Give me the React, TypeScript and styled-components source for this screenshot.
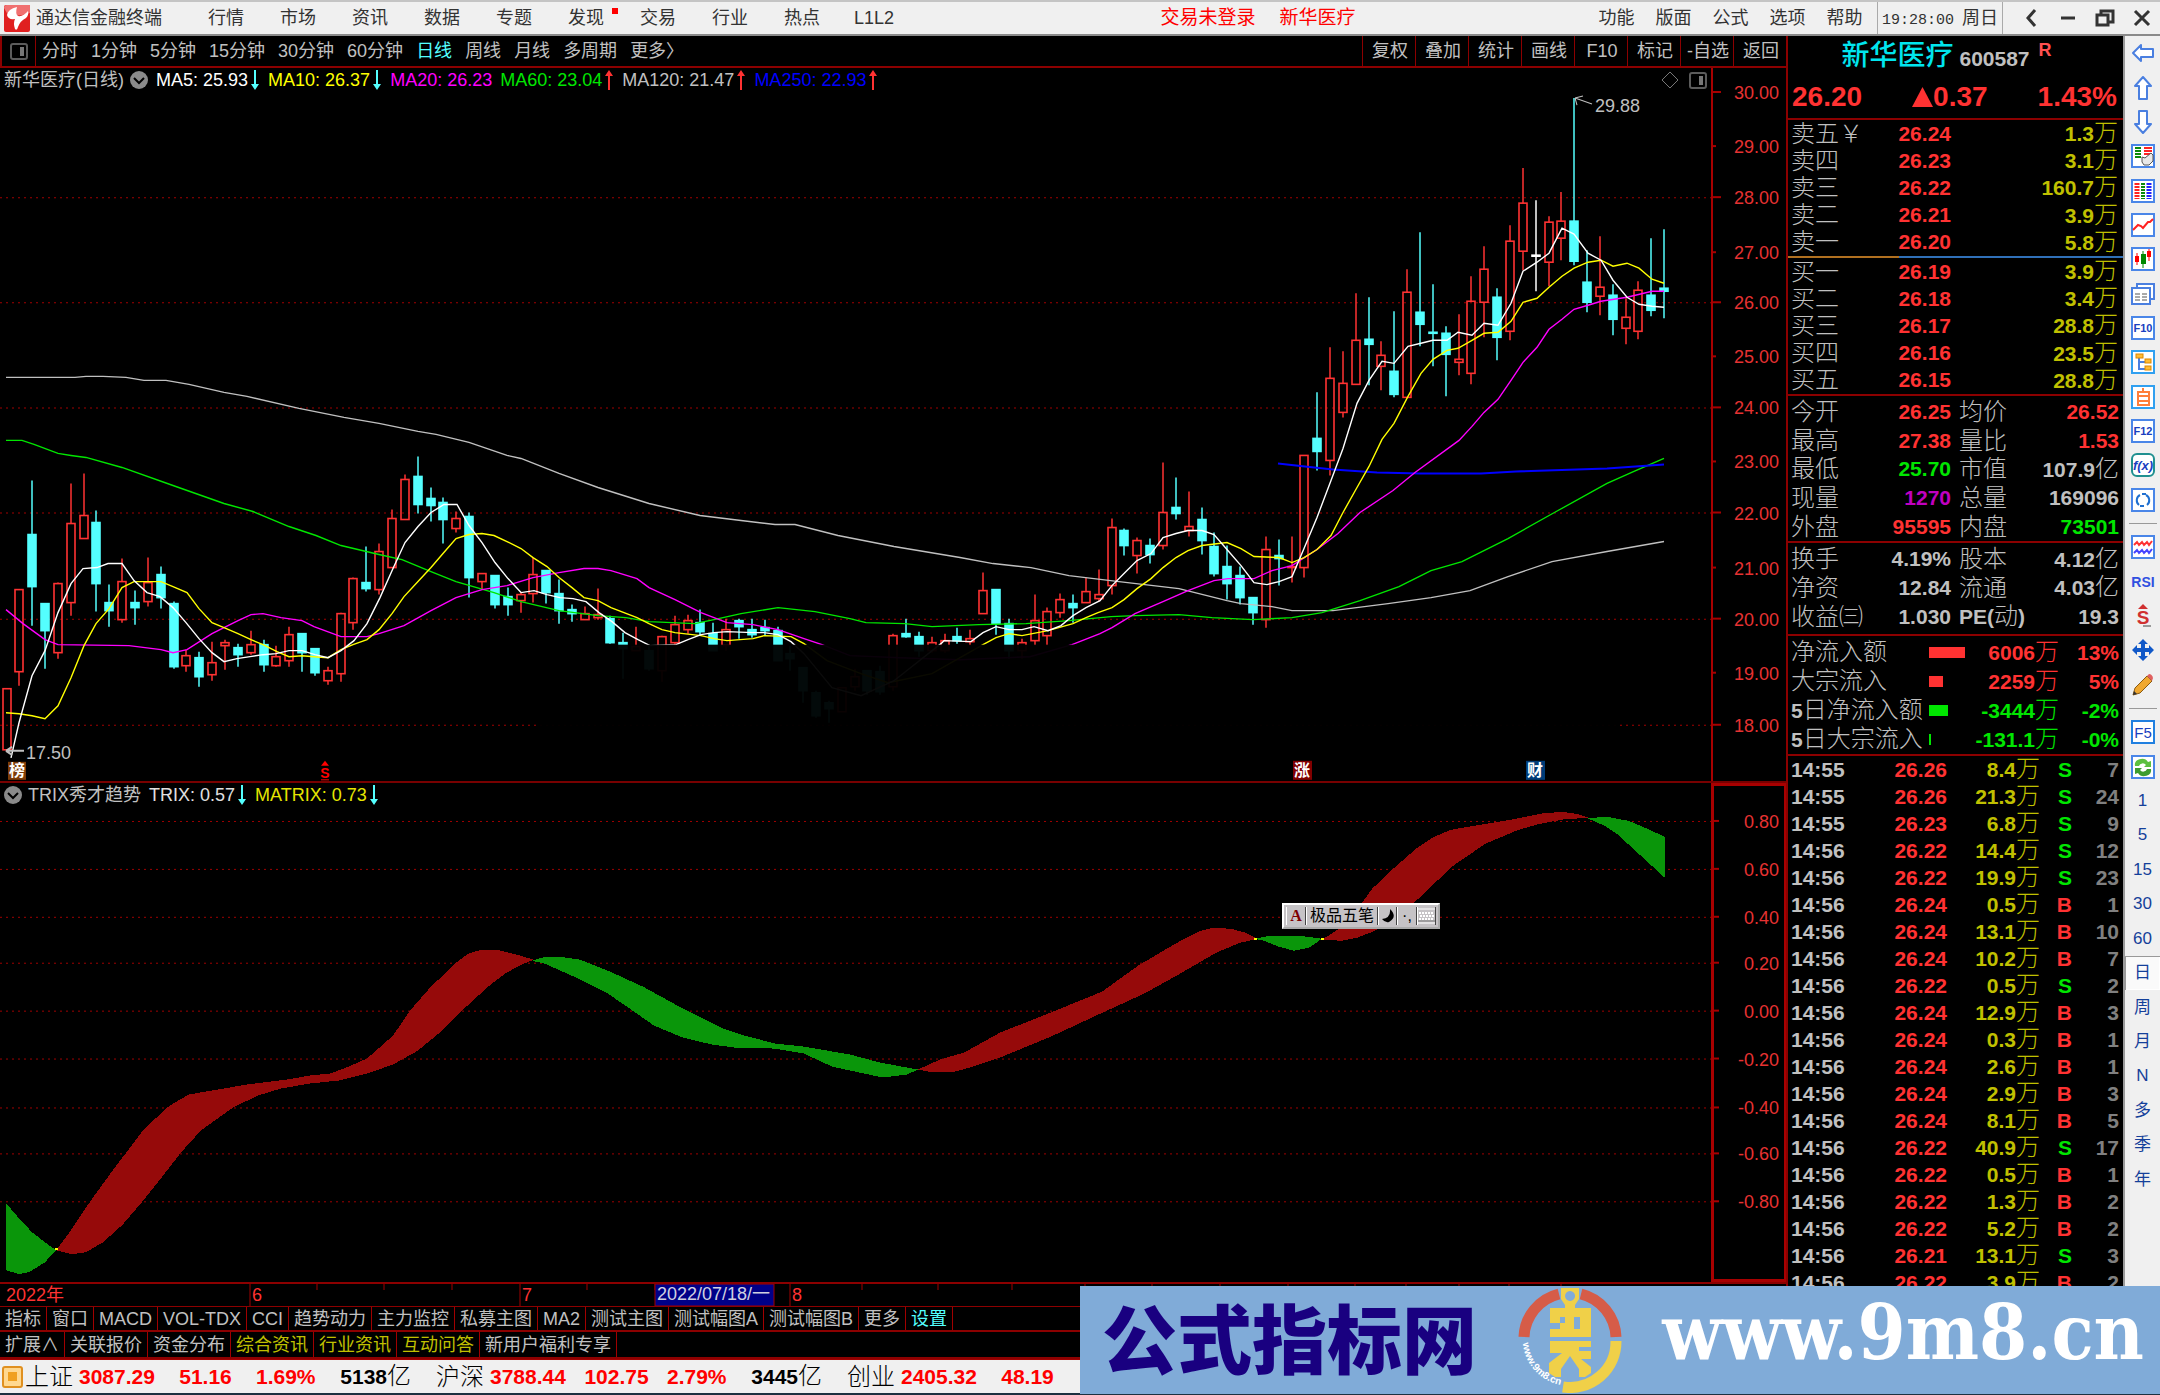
import React from "react";
import styled, { createGlobalStyle } from "styled-components";

const sans = `"Liberation Sans", "Noto Sans CJK SC", sans-serif`;

const GlobalStyle = createGlobalStyle`
  * { box-sizing: border-box; }
  html, body { margin: 0; background: #000; }
  body { font-family: ${sans}; font-size: 18px; line-height: 24px; overflow: hidden; }
  button { font: inherit; color: inherit; background: none; border: 0; padding: 0; margin: 0; cursor: pointer; white-space: nowrap; }
`;

const Shell = styled.div`
  position: relative;
  display: flex;
  flex-direction: column;
  height: 100vh;
  background: #000;
  color: #c0c0c0;
`;

/* ---------- title bar ---------- */

const TitleBar = styled.header`
  display: flex;
  align-items: center;
  height: 36px;
  flex: none;
  background: #f0f0f0;
  color: #333;
  border-top: 2px solid #c4c4c4;
  border-bottom: 2px solid #8a8a8a;
`;
const Brand = styled.div`
  display: flex;
  align-items: center;
  gap: 6px;
  width: 190px;
  padding-left: 4px;
  white-space: nowrap;
`;
const Menu = styled.nav`
  display: flex;
`;
const MenuItem = styled.button<{ $w: number }>`
  position: relative;
  width: ${(p) => p.$w}px;
`;
const NewDot = styled.i`
  position: absolute;
  right: 4px;
  top: 2px;
  width: 6px;
  height: 6px;
  background: #f00;
`;
const Notice = styled.div`
  flex: 1;
  display: flex;
  justify-content: center;
  gap: 24px;
  padding-left: 18px;
  color: #f00;
  font-size: 19px;
`;
const Clock = styled.time`
  width: 126px;
  height: 100%;
  padding: 4px 0 0 4px;
  border-left: 1px solid #aaa;
  border-right: 1px solid #aaa;
  margin-left: 4px;
  font-family: "Liberation Mono", "Noto Sans CJK SC", monospace;
  font-size: 15px;
  white-space: nowrap;
  span { font-family: ${sans}; font-size: 18px; margin-left: 8px; }
`;
const WindowButtons = styled.div`
  display: flex;
  padding-left: 9px;
  button { width: 37px; display: flex; justify-content: center; align-items: center; }
`;

/* ---------- body ---------- */

const Body = styled.main`
  display: grid;
  grid-template-columns: minmax(0, 1fr) 335px 37px;
  grid-template-rows: minmax(0, 1fr);
  flex: 1;
  min-height: 0;
`;
const ChartColumn = styled.section`
  position: relative;
  display: flex;
  flex-direction: column;
  min-height: 0;
  border-right: 2px solid #8c0000;
`;
const PeriodBar = styled.div`
  display: flex;
  align-items: stretch;
  height: 32px;
  flex: none;
  border-bottom: 2px solid #8c0000;
`;
const PanelToggle = styled.button`
  display: flex;
  align-items: center;
  justify-content: center;
  width: 36px;
  border-left: 2px solid #8c0000;
  border-right: 1px solid #8c0000;
`;
const Periods = styled.div`
  display: flex;
  gap: 13px;
  padding-left: 6px;
  flex: 1;
`;
const Period = styled.button<{ $active?: boolean }>`
  color: ${(p) => (p.$active ? "#54ffff" : "#c0c0c0")};
`;
const ToolButton = styled.button`
  width: 53px;
  padding-left: 2px;
  border-left: 1px solid #8c0000;
`;
const Pane = styled.div<{ $grow: number; $line?: boolean }>`
  display: grid;
  grid-template-columns: minmax(0, 1fr) 75px;
  grid-template-rows: minmax(0, 1fr);
  flex: ${(p) => p.$grow} 1 0;
  min-height: 0;
  border-bottom: ${(p) => (p.$line ? "2px solid #780000" : "0")};
`;
const Plot = styled.div`
  display: flex;
  flex-direction: column;
  min-height: 0;
`;
const Drawing = styled.svg`
  display: block;
  width: 100%;
  flex: 1;
  min-height: 0;
  font-family: ${sans};
`;
const Axis = styled.div<{ $box?: boolean }>`
  display: flex;
  min-height: 0;
  border-left: ${(p) => (p.$box ? "3px" : "2px")} solid #a80000;
  box-shadow: ${(p) => (p.$box ? "inset 0 3px #a80000, inset 0 -3px #a80000, inset -2px 0 #a80000" : "none")};
`;
const Legend = styled.div`
  display: flex;
  align-items: center;
  gap: 8px;
  height: 24px;
  flex: none;
  padding: 0 4px;
  white-space: nowrap;
`;
const LegendTitle = styled.span`
  display: flex;
  align-items: center;
  gap: 6px;
`;
const LegendItem = styled.span<{ $c: string }>`
  display: flex;
  align-items: center;
  gap: 2px;
  color: ${(p) => p.$c};
`;
const LegendTools = styled.span`
  display: flex;
  align-items: center;
  gap: 10px;
  margin-left: auto;
`;
const DateAxis = styled.div`
  height: 25px;
  flex: none;
  display: flex;
  border-top: 2px solid #8c0000;
  border-bottom: 1px solid #8c0000;
`;
const TabRow = styled.div<{ $h: number }>`
  display: flex;
  height: ${(p) => p.$h}px;
  flex: none;
  border-bottom: 2px solid #8c0000;
`;
const Tab = styled.button<{ $c?: string }>`
  padding: 0 5px;
  border-right: 1px solid #a00000;
  color: ${(p) => p.$c || "#c0c0c0"};
`;

/* ---------- input method strip ---------- */

const Ime = styled.div`
  position: absolute;
  left: 1282px;
  top: 867px;
  display: flex;
  align-items: stretch;
  height: 26px;
  padding: 2px;
  background: #c6c3c6;
  border: 2px outset #fff;
  color: #000;
`;
const ImeKey = styled.button<{ $w: number; $red?: boolean }>`
  display: flex;
  align-items: center;
  justify-content: center;
  width: ${(p) => p.$w}px;
  height: 18px;
  font-size: 16px;
  line-height: 18px;
  font-weight: ${(p) => (p.$red ? 700 : 400)};
  color: ${(p) => (p.$red ? "#800000" : "#000")};
  font-family: ${(p) => (p.$red ? `"Liberation Serif", serif` : sans)};
  border-right: 1px solid #444;
  border-left: 1px solid #fff;
`;

/* ---------- quote panel ---------- */

const Quote = styled.aside`
  min-height: 0;
  overflow: hidden;
  display: flex;
  flex-direction: column;
`;
const NameRow = styled.h1`
  display: flex;
  align-items: center;
  justify-content: center;
  gap: 6px;
  height: 40px;
  padding-right: 18px;
  margin: 0;
  flex: none;
  font-size: 28px;
  font-weight: 500;
  color: #00e5ee;
`;
const Code = styled.span`
  font-size: 21px;
  font-weight: 700;
  color: #c0c0c0;
  padding-top: 6px;
`;
const Flag = styled.sup`
  font-size: 18px;
  font-weight: 700;
  color: #ff5050;
  align-self: flex-start;
  padding: 2px 0 0 3px;
`;
const PriceRow = styled.div`
  display: flex;
  align-items: center;
  justify-content: space-between;
  height: 44px;
  flex: none;
  padding: 0 6px 0 4px;
  font-size: 28px;
  font-weight: 700;
  color: #ff3232;
  border-bottom: 2px solid #8c0000;
`;
const Change = styled.span`
  display: flex;
  align-items: center;
`;
const Grid = styled.table<{ $h: number }>`
  table-layout: fixed;
  width: 100%;
  height: ${(p) => p.$h}px;
  flex: none;
  border-collapse: collapse;
  td, th { padding: 0; white-space: nowrap; line-height: 24px; }
`;
const Section = styled.div<{ $pt?: number; $pb?: number; $open?: boolean }>`
  flex: none;
  padding: ${(p) => p.$pt || 0}px 0 ${(p) => p.$pb || 0}px;
  border-bottom: ${(p) => (p.$open ? "0" : "2px solid #8c0000")};
`;
const Divider = styled.div`
  height: 2px;
  flex: none;
  background: linear-gradient(90deg, #b07020 0 33%, #3070b8 33%);
`;
const Label = styled.th<{ $pl?: number }>`
  && { padding-left: ${(p) => p.$pl || 3}px; }
  text-align: left;
  font-size: 24px;
  font-weight: 300;
  color: #c0c0c0;
  b { font-size: 21px; font-weight: 700; }
`;
const Value = styled.td<{ $c?: string; $pr?: number }>`
  && { padding-right: ${(p) => p.$pr || 0}px; }
  text-align: right;
  font-size: 21px;
  font-weight: 700;
  color: ${(p) => p.$c || "#c0c0c0"};
`;
const Unit = styled.span`
  font-size: 24px;
  font-weight: 300;
`;
const Bar = styled.i<{ $c: string }>`
  display: block;
  height: 11px;
  background: ${(p) => p.$c};
`;

/* ---------- side toolbar ---------- */

const SideBar = styled.nav`
  display: flex;
  flex-direction: column;
  background: #f0f0f0;
  border-left: 2px solid #9a9a9a;
  color: #14409a;
`;
const SideGroup = styled.div<{ $h: number }>`
  display: flex;
  flex-direction: column;
  height: ${(p) => p.$h}px;
  flex: none;
`;
const SideRule = styled.hr`
  width: 28px;
  margin: 6px 4px;
  border: 0;
  border-top: 1px solid #999;
  flex: none;
`;
const SideButton = styled.button<{ $on?: boolean }>`
  flex: 1;
  min-height: 0;
  display: flex;
  align-items: center;
  justify-content: center;
  font-size: 17px;
  background: ${(p) => (p.$on ? "#fafafa" : "none")};
  box-shadow: ${(p) => (p.$on ? "inset 1px 1px #999, inset -1px -1px #fff" : "none")};
`;

/* ---------- index bar and banner ---------- */

const IndexBar = styled.footer`
  display: flex;
  align-items: center;
  height: 36px;
  flex: none;
  background: #f0f0f0;
  border-top: 1px solid #a00000;
  border-bottom: 2px solid #1c3040;
  padding-left: 2px;
`;
const IndexGroup = styled.div`
  display: grid;
  grid-template-columns: 54px 76px 101px 60px 95px;
  width: 411px;
  align-items: center;
  font-size: 21px;
  font-weight: 700;
  color: #f00;
  white-space: nowrap;
`;
const IndexName = styled.span`
  font-size: 24px;
  font-weight: 300;
  color: #000;
`;
const Centered = styled.span`
  text-align: center;
`;
const Turnover = styled.span`
  text-align: right;
  color: #000;
`;
const Banner = styled.a`
  position: absolute;
  right: 0;
  bottom: 1px;
  width: 50%;
  height: 108px;
  display: flex;
  align-items: center;
  justify-content: space-between;
  padding: 0 16px 0 22px;
  background: #80abd8;
  text-decoration: none;
  white-space: nowrap;
`;
const BannerName = styled.span`
  font-family: "Noto Sans CJK SC", sans-serif;
  font-size: 75px;
  line-height: 100px;
  font-weight: 900;
  color: #190080;
  padding-bottom: 8px;
`;
const BannerUrl = styled.span`
  font-family: "DejaVu Serif Condensed", "DejaVu Serif", serif;
  font-size: 77px;
  line-height: 100px;
  font-weight: 700;
  color: #fff;
  padding-bottom: 16px;
`;

/* ---------- data ---------- */

type Kind = "r" | "c" | "w";
// high, body top, body bottom, low, kind
const candles: [number, number, number, number, Kind][] = [
  [688, 688, 749, 749, "r"], [589, 589, 671, 685, "r"], [480, 534, 586, 625, "c"], [603, 603, 630, 668, "c"],
  [582, 583, 652, 658, "r"], [483, 523, 602, 615, "r"], [473, 515, 538, 538, "r"], [510, 522, 583, 611, "c"],
  [584, 602, 610, 626, "c"], [558, 581, 619, 622, "r"], [590, 602, 607, 624, "c"], [557, 582, 601, 606, "r"],
  [566, 574, 597, 608, "c"], [601, 603, 666, 668, "c"], [649, 655, 665, 671, "r"], [651, 657, 676, 686, "c"],
  [641, 662, 674, 680, "r"], [639, 642, 645, 669, "r"], [643, 647, 654, 666, "c"], [630, 644, 652, 654, "r"],
  [639, 644, 664, 671, "c"], [645, 656, 665, 666, "r"], [626, 634, 660, 666, "r"], [633, 633, 652, 671, "c"],
  [648, 648, 672, 675, "c"], [666, 670, 680, 684, "r"], [612, 613, 673, 681, "r"], [577, 578, 622, 629, "r"],
  [546, 582, 588, 591, "c"], [543, 551, 589, 594, "r"], [509, 518, 567, 567, "r"], [474, 479, 519, 519, "r"],
  [456, 476, 504, 513, "c"], [487, 498, 505, 521, "c"], [497, 502, 519, 543, "c"], [511, 518, 528, 532, "r"],
  [512, 516, 577, 597, "c"], [573, 573, 581, 589, "r"], [575, 575, 604, 608, "c"], [587, 596, 604, 615, "c"],
  [592, 594, 600, 612, "r"], [557, 574, 593, 602, "r"], [570, 570, 592, 603, "c"], [579, 593, 610, 623, "c"],
  [604, 609, 613, 621, "c"], [606, 613, 619, 619, "r"], [588, 614, 617, 619, "r"], [615, 618, 642, 643, "c"],
  [632, 642, 648, 678, "c"], [626, 646, 650, 650, "r"], [645, 650, 668, 670, "c"], [635, 636, 670, 681, "r"],
  [615, 624, 642, 645, "r"], [614, 620, 629, 633, "r"], [609, 622, 631, 635, "c"], [622, 633, 650, 650, "c"],
  [618, 629, 645, 650, "r"], [618, 620, 626, 638, "c"], [618, 629, 634, 637, "c"], [619, 627, 630, 635, "c"],
  [626, 630, 660, 660, "c"], [645, 653, 658, 670, "c"], [667, 667, 690, 702, "c"], [690, 692, 715, 717, "c"],
  [700, 702, 708, 722, "c"], [687, 687, 711, 711, "r"], [668, 676, 686, 690, "r"], [670, 670, 690, 694, "c"],
  [665, 671, 691, 694, "c"], [633, 635, 686, 690, "r"], [618, 633, 636, 637, "c"], [631, 636, 650, 656, "c"],
  [636, 642, 650, 652, "r"], [633, 640, 650, 652, "r"], [627, 636, 640, 643, "c"], [629, 638, 641, 645, "r"],
  [572, 590, 613, 613, "r"], [589, 589, 623, 634, "c"], [618, 623, 650, 658, "c"], [638, 642, 650, 658, "r"],
  [594, 620, 640, 645, "r"], [607, 611, 635, 645, "r"], [593, 599, 612, 617, "r"], [594, 603, 607, 622, "c"],
  [577, 591, 602, 602, "r"], [569, 594, 598, 601, "r"], [518, 527, 585, 594, "r"], [528, 530, 545, 555, "c"],
  [537, 540, 555, 573, "r"], [538, 545, 554, 563, "c"], [462, 512, 545, 549, "r"], [477, 507, 513, 519, "c"],
  [491, 526, 530, 536, "r"], [507, 519, 540, 554, "c"], [532, 546, 573, 576, "c"], [545, 566, 583, 599, "c"],
  [566, 575, 597, 604, "c"], [597, 597, 612, 624, "c"], [536, 549, 619, 627, "r"], [539, 555, 558, 585, "c"],
  [536, 566, 567, 582, "r"], [455, 455, 567, 577, "r"], [392, 438, 451, 470, "c"], [347, 378, 460, 475, "r"],
  [351, 383, 412, 417, "r"], [293, 340, 384, 384, "r"], [297, 339, 344, 385, "c"], [341, 355, 366, 390, "r"],
  [311, 371, 394, 397, "c"], [269, 292, 397, 397, "r"], [232, 312, 324, 346, "c"], [284, 332, 333, 366, "c"],
  [326, 333, 354, 396, "c"], [314, 359, 362, 375, "r"], [276, 301, 373, 384, "r"], [246, 269, 302, 337, "r"],
  [288, 297, 337, 360, "c"], [225, 241, 331, 340, "r"], [168, 203, 251, 270, "r"], [200, 255, 256, 291, "w"],
  [216, 222, 262, 286, "r"], [192, 221, 238, 260, "r"], [98, 221, 261, 265, "c"], [250, 282, 302, 312, "c"],
  [236, 287, 296, 315, "r"], [284, 295, 319, 335, "c"], [298, 317, 328, 344, "r"], [281, 290, 331, 339, "r"],
  [238, 295, 310, 316, "c"], [229, 288, 291, 318, "c"],
];
const tone: Record<Kind, string> = { r: "#ff3232", c: "#54ffff", w: "#ffffff" };

const averages: [string, string][] = [
  ["#c0c0c0", "6,377 75,377 86,376 103,376 126,377 144,380 166,380 189,384 224,392 247,396 299,408 344,417 379,423 418,431 436,434 469,442 507,455 521,458 559,473 598,487 649,503 700,515 741,520 775,524 795,524 838,535 894,546 960,557 993,563 1031,567 1069,575 1119,581 1179,588 1227,600 1241,603 1272,606 1292,610 1333,610 1388,603 1431,597 1470,590 1508,576 1552,561 1607,551 1664,541"],
  ["#00e600", "6,440 22,440 34,444 58,453 71,455 86,457 122,467 173,485 224,503 253,511 289,526 316,535 341,545 379,554 402,559 431,571 456,581 494,592 521,601 559,610 598,615 626,617 649,621 695,623 714,619 741,613 778,607 815,611 850,618 866,622 905,623 932,626 979,624 1026,623 1069,620 1111,616 1135,615 1179,614 1212,617 1253,619 1292,617 1322,612 1360,600 1399,586 1431,570 1462,561 1508,538 1558,510 1607,483 1634,471 1664,458"],
  ["#0000ff", "1278,463 1305,466 1333,469 1377,472 1420,473 1481,473 1516,471 1607,468 1664,464"],
  ["#ff00ff", "6,609 23,623 45,639 58,644 129,645 161,649 173,652 187,649 212,633 238,620 251,614 263,613 281,617 302,620 314,626 341,636 367,636 379,633 404,625 431,610 456,597 482,589 507,585 533,577 559,572 584,568 598,568 611,570 637,578 649,587 675,599 701,612 727,622 753,624 778,629 804,638 822,644 850,655 900,657 960,659 1030,656 1072,644 1100,633 1112,627 1135,613 1163,601 1188,590 1214,580 1228,578 1254,578 1272,570 1292,565 1317,549 1338,533 1360,512 1393,490 1415,472 1459,440 1472,426 1484,412 1498,399 1511,380 1523,362 1537,347 1549,329 1562,319 1574,309 1588,305 1601,301 1627,297 1652,291 1664,291"],
  ["#ffff00", "6,712 19,713 32,715 45,718 58,705 71,677 84,645 96,623 109,608 122,587 134,581 161,581 173,586 187,592 199,608 212,622 224,627 238,633 251,639 263,644 277,651 289,656 302,655 314,656 328,657 341,649 353,644 367,639 379,629 392,613 404,596 418,581 431,567 443,553 456,538 469,534 482,533 494,535 507,541 521,548 533,557 547,566 559,577 572,587 584,597 598,600 611,607 637,617 649,623 662,629 675,632 701,635 714,638 727,640 753,638 764,635 791,636 804,643 827,660 861,673 888,682 932,673 983,644 996,637 1009,633 1022,635 1048,630 1073,623 1086,617 1098,612 1112,607 1124,599 1137,588 1151,578 1163,567 1176,557 1188,550 1202,545 1227,542 1241,548 1254,556 1279,557 1292,562 1304,557 1317,549 1331,535 1343,512 1357,487 1369,466 1382,439 1394,423 1408,396 1421,373 1433,359 1447,350 1458,348 1472,340 1484,333 1498,332 1511,321 1523,302 1537,298 1549,287 1562,276 1574,268 1588,262 1601,260 1613,266 1627,263 1639,268 1652,279 1664,283"],
  ["#ffffff", "11,757 19,722 32,675 45,650 58,612 71,583 83,568 97,567 108,563 122,563 134,580 147,592 160,596 173,607 186,622 199,638 212,652 224,661 237,658 250,656 263,654 276,653 289,650 302,650 315,654 328,657 341,650 354,640 367,623 380,597 393,568 405,542 418,526 431,512 444,504 457,504 469,525 482,542 495,562 508,578 521,592 534,590 547,594 560,597 573,598 586,601 599,612 612,621 625,632 638,639 650,645 676,644 688,639 701,634 714,632 727,631 753,632 764,632 778,634 791,641 804,653 832,687 861,695 894,680 941,643 944,640 971,641 983,632 996,626 1009,629 1022,629 1034,626 1048,630 1061,625 1073,615 1086,607 1100,600 1112,585 1124,573 1137,560 1151,553 1163,537 1176,533 1188,530 1202,530 1214,534 1227,549 1241,565 1254,582 1267,584 1279,581 1292,576 1304,548 1317,517 1331,480 1343,448 1357,403 1369,380 1382,361 1394,363 1408,346 1421,343 1433,340 1447,340 1458,332 1472,335 1484,323 1498,325 1511,303 1523,271 1537,262 1549,253 1562,228 1574,234 1588,253 1601,260 1613,280 1627,297 1639,304 1652,306 1664,307"],
];

const ribbons: [boolean, string][] = [
  [false, "6,1203 19,1218 32,1232 45,1242 56,1250 45,1262 29,1272 19,1274 6,1270"],
  [true, "56,1250 71,1230 84,1210 96,1193 115,1167 143,1130 166,1108 175,1102 189,1094 212,1090 247,1084 287,1079 310,1075 330,1073 344,1068 367,1058 393,1035 410,1010 430,987 456,962 468,953 481,949 497,949 517,954 534,959 521,964 505,973 488,986 462,1010 442,1030 418,1050 393,1064 367,1073 339,1080 310,1083 281,1088 258,1095 233,1107 201,1130 181,1152 161,1178 141,1203 122,1225 103,1242 86,1252 72,1254"],
  [false, "532,960 545,956 560,956 580,959 608,970 643,986 683,1008 723,1028 741,1034 775,1043 804,1046 850,1054 880,1062 918,1069 907,1074 883,1077 850,1070 832,1066 804,1053 775,1048 735,1047 712,1044 683,1037 654,1025 637,1013 608,993 574,976 545,963"],
  [true, "918,1069 940,1059 964,1052 1000,1032 1048,1013 1102,991 1138,965 1165,949 1186,937 1201,930 1213,927 1231,928 1246,932 1258,938 1240,942 1216,952 1180,973 1144,993 1096,1015 1051,1036 1000,1057 970,1067 955,1071 928,1071"],
  [false, "1255,938 1270,935 1300,935 1322,938 1309,947 1294,950 1279,946 1264,940"],
  [true, "1322,939 1339,928 1360,905 1372,888 1393,868 1417,847 1432,837 1450,829 1485,823 1515,818 1545,812 1563,811 1578,813 1589,817 1566,818 1539,823 1518,829 1485,843 1453,865 1435,882 1414,902 1375,930 1357,937 1342,940"],
  [false, "1587,817 1608,816 1629,820 1650,829 1665,836 1665,877 1641,855 1617,833 1605,825"],
];

const priceTicks: [string, number][] = [
  ["30.00", 92], ["29.00", 146], ["28.00", 197], ["27.00", 252], ["26.00", 302], ["25.00", 356], ["24.00", 407],
  ["23.00", 461], ["22.00", 512], ["21.00", 567], ["20.00", 618], ["19.00", 672], ["18.00", 724],
];
const trixTicks: [string, number][] = [
  ["0.80", 820], ["0.60", 868], ["0.40", 916], ["0.20", 962], ["0.00", 1010], ["-0.20", 1058], ["-0.40", 1107],
  ["-0.60", 1153], ["-0.80", 1201],
];
const weekTicks = [317, 384, 452, 587, 655, 862, 938, 1012, 1085, 1152, 1220, 1288, 1355, 1406, 1459, 1509, 1561];

const sells = [["卖五￥", "26.24", "1.3"], ["卖四", "26.23", "3.1"], ["卖三", "26.22", "160.7"], ["卖二", "26.21", "3.9"], ["卖一", "26.20", "5.8"]];
const buys = [["买一", "26.19", "3.9"], ["买二", "26.18", "3.4"], ["买三", "26.17", "28.8"], ["买四", "26.16", "23.5"], ["买五", "26.15", "28.8"]];

const RED = "#ff3232";
const GREEN = "#00e600";
const YELLOW = "#c0c000";

type Stat = [string, string, string, string, string, string, string?];
const statsA: Stat[] = [
  ["今开", "26.25", RED, "均价", "26.52", RED],
  ["最高", "27.38", RED, "量比", "1.53", RED],
  ["最低", "25.70", GREEN, "市值", "107.9", "#c0c0c0", "亿"],
  ["现量", "1270", "#c000c0", "总量", "169096", "#c0c0c0"],
  ["外盘", "95595", RED, "内盘", "73501", GREEN],
];
const statsB: Stat[] = [
  ["换手", "4.19%", "#c0c0c0", "股本", "4.12", "#c0c0c0", "亿"],
  ["净资", "12.84", "#c0c0c0", "流通", "4.03", "#c0c0c0", "亿"],
  ["收益㈢", "1.030", "#c0c0c0", "PE", "19.3", "#c0c0c0"],
];
const flows: [string, string, number, string, string, string][] = [
  ["", "净流入额", 36, "6006", "13%", RED],
  ["", "大宗流入", 14, "2259", "5%", RED],
  ["5", "日净流入额", 19, "-3444", "-2%", GREEN],
  ["5", "日大宗流入", 2, "-131.1", "-0%", GREEN],
];
const deals: [string, string, string, "S" | "B", number][] = [
  ["14:55", "26.26", "8.4", "S", 7], ["14:55", "26.26", "21.3", "S", 24], ["14:55", "26.23", "6.8", "S", 9],
  ["14:56", "26.22", "14.4", "S", 12], ["14:56", "26.22", "19.9", "S", 23], ["14:56", "26.24", "0.5", "B", 1],
  ["14:56", "26.24", "13.1", "B", 10], ["14:56", "26.24", "10.2", "B", 7], ["14:56", "26.22", "0.5", "S", 2],
  ["14:56", "26.24", "12.9", "B", 3], ["14:56", "26.24", "0.3", "B", 1], ["14:56", "26.24", "2.6", "B", 1],
  ["14:56", "26.24", "2.9", "B", 3], ["14:56", "26.24", "8.1", "B", 5], ["14:56", "26.22", "40.9", "S", 17],
  ["14:56", "26.22", "0.5", "B", 1], ["14:56", "26.22", "1.3", "B", 2], ["14:56", "26.22", "5.2", "B", 2],
  ["14:56", "26.21", "13.1", "S", 3], ["14:56", "26.22", "3.9", "B", 2],
];

/* ---------- small drawings ---------- */

const Arrow = ({ up }: { up?: boolean }) => (
  <svg width="10" height="20" viewBox="0 0 10 20" aria-hidden>
    {up ? <path d="M5 0L9 6H6V20H4V6H1Z" fill="#ff3232" /> : <path d="M5 20L9 14H6V0H4V14H1Z" fill="#54ffff" />}
  </svg>
);
const Chevron = () => (
  <svg width="18" height="18" viewBox="0 0 18 18" aria-hidden>
    <circle cx="9" cy="9" r="9" fill="#8a8a8a" />
    <path d="M4 7l5 5 5-5" stroke="#000" strokeWidth="2" fill="none" />
  </svg>
);
const PanelIcon = () => (
  <svg width="18" height="17" viewBox="0 0 18 17" aria-hidden>
    <rect x="1" y="1" width="16" height="15" rx="2" fill="none" stroke="#5c5c5c" strokeWidth="2" />
    <rect x="10" y="4" width="4" height="9" fill="#777" />
  </svg>
);

const Framed = ({ children, edge = "#4a86e8" }: { children: React.ReactNode; edge?: string }) => (
  <svg width="24" height="24" viewBox="0 0 24 24" aria-hidden>
    <rect x="1" y="1" width="22" height="22" fill="#fff" stroke={edge} strokeWidth="2" />
    {children}
  </svg>
);
const Plain = ({ children }: { children: React.ReactNode }) => (
  <svg width="24" height="24" viewBox="0 0 24 24" aria-hidden>
    {children}
  </svg>
);
const arrowPaint = { fill: "#fff", stroke: "#4a7fe0", strokeWidth: 2, strokeLinejoin: "round" as const };
const iconText = { fontSize: 14, fill: "#1a3fc0", textAnchor: "middle" as const, fontFamily: "Liberation Sans" };

const sideTop: [string, React.ReactNode][] = [
  ["后退", <Plain><path d="M2 12L10 4V8H22V16H10V20Z" {...arrowPaint} /></Plain>],
  ["上翻", <Plain><path d="M12 1L20 10H16V23H8V10H4Z" {...arrowPaint} /></Plain>],
  ["下翻", <Plain><path d="M12 23L20 14H16V1H8V14H4Z" {...arrowPaint} /></Plain>],
  ["报价", <Framed><path d="M4 4h6M4 7h6M4 10h6M4 13h6" stroke="#0a8a0a" strokeWidth="2" /><path d="M13 4h8M13 7h8M13 10h8" stroke="#f22" strokeWidth="2" /><path d="M11 13l3 1 6-5 2 2v6l-4 4h-5l-2-3z" fill="#e8e8e8" stroke="#555" /></Framed>],
  ["行情表", <Framed><path d="M6 4v16" stroke="#f22" strokeWidth="5" strokeDasharray="2 1" /><path d="M12 4v16" stroke="#0a8a0a" strokeWidth="4" strokeDasharray="2 1" /><path d="M18 4v16" stroke="#22f" strokeWidth="5" strokeDasharray="2 1" /></Framed>],
  ["分时图", <Framed><path d="M2 17l5-5 3 1 2 2 5-6h2l3-3" stroke="#f22" strokeWidth="2" fill="none" /></Framed>],
  ["K线图", <Framed><path d="M6 6v12M18 2v12" stroke="#f00" strokeWidth="1" /><path d="M12 4v17" stroke="#080" /><rect x="4" y="9" width="4" height="6" fill="#f00" /><rect x="10" y="7" width="5" height="10" fill="#080" /><rect x="16" y="4" width="4" height="6" fill="#f00" /></Framed>],
  ["多窗", <Plain><rect x="6" y="2" width="17" height="15" fill="#fff" stroke="#4a7fe0" strokeWidth="2" /><rect x="1" y="6" width="18" height="16" fill="#fff" stroke="#4a7fe0" strokeWidth="2" /><path d="M4 12h5M4 15h5M4 18h5M11 12h5M11 15h5M11 18h5" stroke="#555" /></Plain>],
  ["F10", <Framed><text x="12" y="16" {...iconText} fontSize={11} fontWeight={700}>F10</text></Framed>],
  ["板块", <Framed edge="#30a0f0"><path d="M8 8v11h6M8 12h6" stroke="#4a7fe0" strokeWidth="2" fill="none" /><rect x="5" y="4" width="7" height="4" fill="#fb3" stroke="#d80" /><rect x="14" y="9" width="6" height="4" fill="#fb3" stroke="#d80" /><rect x="14" y="16" width="6" height="4" fill="#fb3" stroke="#d80" /></Framed>],
  ["自选", <Framed edge="#30a0f0"><path d="M12 3v4M7 7h11v13H7zM7 11h11M7 16h11" stroke="#ff7f3a" strokeWidth="2" fill="none" /></Framed>],
  ["F12", <Framed><text x="12" y="16" {...iconText} fontSize={11} fontWeight={700}>F12</text></Framed>],
  ["公式", <Plain><rect x="1" y="1" width="22" height="22" rx="5" fill="#fff" stroke="#209090" strokeWidth="2" /><text x="12" y="17" {...iconText} fontStyle="italic" fontWeight={700} fontSize={13}>f(x)</text></Plain>],
  ["刷新", <Framed><path d="M8 17a6 6 0 0 1 1-10M15 7a6 6 0 0 1 1 10M11 6h4M9 18h4" stroke="#2070d0" strokeWidth="2" fill="none" /></Framed>],
];
const sideMid: [string, React.ReactNode][] = [
  ["波动", <Framed><path d="M3 10l3-3 2 3 3-3 2 3 3-3 2 3 3-4" stroke="#f33" strokeWidth="2" fill="none" /><path d="M3 18l3-3 2 3 3-3 2 3 3-3 2 3 3-4" stroke="#44f" strokeWidth="2" fill="none" /></Framed>],
  ["RSI", <Plain><text x="12" y="17" fontSize="14" fontWeight="700" fill="#3050e0" textAnchor="middle">RSI</text></Plain>],
  ["信号", <Plain><path d="M12 0l5 5H7z" fill="#d03030" /><path d="M12 22h8" stroke="#999" strokeWidth="2" /><text x="12" y="20" fontSize="19" fontWeight="700" fill="#d03030" textAnchor="middle">S</text></Plain>],
  ["移动", <Plain><path d="M12 1l5 5h-3v4h4V7l5 5-5 5v-3h-4v4h3l-5 5-5-5h3v-4H6v3l-5-5 5-5v3h4V6H7z" fill="#1058c8" /></Plain>],
  ["画笔", <Plain><path d="M2 22l2-7L16 3l5 5L9 20z" fill="#f0a830" stroke="#8a5a10" /><path d="M16 3l2-2q3 0 4 4l-1 3z" fill="#e06060" /><path d="M2 22l1-4 3 3z" fill="#333" /></Plain>],
];
const sideLow: [string, React.ReactNode][] = [
  ["F5", <Framed edge="#2080e0"><text x="12" y="18" {...iconText} fontSize={15}>F5</text></Framed>],
  ["更新", <Framed><path d="M4 11a7 6 0 0 1 13-4l3-1v6h-7l2-2a4 4 0 0 0-7 1z" fill="#5cc040" /><path d="M20 14a7 6 0 0 1-13 4l-3 1v-6h7l-2 2a4 4 0 0 0 7-1z" fill="#3c9c30" /></Framed>],
];
const sidePeriods = ["1", "5", "15", "30", "60", "日", "周", "月", "N", "多", "季", "年"];

const dots = { stroke: "#a00000", strokeWidth: 1, strokeDasharray: "2 4" };

/* ---------- parts ---------- */

const PriceChart = () => (
  <Drawing viewBox="0 92 1711 688" preserveAspectRatio="none" role="img" aria-label="日线">
    {[197, 302, 407, 512, 618, 724].map((y) => (
      <line key={y} x1="0" x2="1711" y1={y + 0.5} y2={y + 0.5} {...dots} />
    ))}
    {candles.map(([h, t, b, l, k], i) => {
      const x = Math.round(6.5 + 12.85 * i);
      return (
        <g key={i} stroke={tone[k]} fill={k === "r" ? "none" : tone[k]}>
          <line x1={x} x2={x} y1={h} y2={t} strokeWidth="1.5" />
          <line x1={x} x2={x} y1={b} y2={l} strokeWidth="1.5" />
          <rect x={x - 4} y={t} width="8" height={Math.max(1, b - t)} strokeWidth="1.6" />
        </g>
      );
    })}
    {averages.map(([c, p]) => (
      <polyline key={c} points={p} fill="none" stroke={c} strokeWidth={c === "#0000ff" ? 2 : 1.4} />
    ))}
    <rect x="540" y="644" width="1080" height="112" fill="#000" opacity="0.96" />
    <path d="M6 750H24M6 750l6-4M6 750l6 4" stroke="#c0c0c0" strokeWidth="2" fill="none" />
    <text x="26" y="758" fontSize="18" fill="#c0c0c0">17.50</text>
    <path d="M1575 98l17 6M1575 98l8-2M1575 98l2 7" stroke="#c0c0c0" fill="none" />
    <text x="1595" y="112" fontSize="18" fill="#c0c0c0">29.88</text>
    <rect x="8" y="761" width="18" height="18" fill="#7d3c08" />
    <text x="17" y="775" fontSize="16" fontWeight="700" fill="#fff" textAnchor="middle">榜</text>
    <path d="M325 760l4 5h-8z" fill="#f00" />
    <text x="325" y="777" fontSize="14" fontWeight="700" fill="#f00" textAnchor="middle">S</text>
    <path d="M321 779h8" stroke="#f00" />
    <rect x="1293" y="760" width="19" height="19" fill="#800000" />
    <text x="1302" y="775" fontSize="16" fontWeight="700" fill="#fff" textAnchor="middle">涨</text>
    <rect x="1526" y="760" width="19" height="19" fill="#003c78" />
    <text x="1535" y="775" fontSize="16" fontWeight="700" fill="#fff" textAnchor="middle">财</text>
  </Drawing>
);

const QuoteRows = ({ rows }: { rows: string[][] }) => (
  <Grid $h={136}>
    <colgroup><col width="90" /><col width="73" /><col /></colgroup>
    <tbody>
      {rows.map(([n, p, v]) => (
        <tr key={n}>
          <Label scope="row">{n}</Label>
          <Value $c={RED}>{p}</Value>
          <Value $c={YELLOW} $pr={5}>{v}<Unit>万</Unit></Value>
        </tr>
      ))}
    </tbody>
  </Grid>
);

const StatRows = ({ rows, h }: { rows: Stat[]; h: number }) => (
  <Grid $h={h}>
    <colgroup><col width="80" /><col width="83" /><col width="70" /><col /></colgroup>
    <tbody>
      {rows.map(([a, av, ac, b, bv, bc, unit]) => (
        <tr key={a}>
          <Label scope="row">{a}</Label>
          <Value $c={ac}>{av}</Value>
          <Label scope="row" $pl={8}>{b === "PE" ? <><b>PE(</b>动<b>)</b></> : b}</Label>
          <Value $c={bc} $pr={4}>{bv}{unit && <Unit>{unit}</Unit>}</Value>
        </tr>
      ))}
    </tbody>
  </Grid>
);

const IndexQuote = ({ name, v, c, p, t }: { name: string; v: string; c: string; p?: string; t?: string }) => (
  <IndexGroup>
    <IndexName>{name}</IndexName>
    <span>{v}</span>
    <Centered>{c}</Centered>
    <span>{p}</span>
    {t && <Turnover>{t}<Unit>亿</Unit></Turnover>}
  </IndexGroup>
);

const SideIcons = ({ items, h }: { items: [string, React.ReactNode][]; h: number }) => (
  <SideGroup $h={h}>
    {items.map(([n, icon]) => <SideButton key={n} aria-label={n}>{icon}</SideButton>)}
  </SideGroup>
);

export default function App() {
  return (
    <>
      <GlobalStyle />
      <Shell>
        <TitleBar>
          <Brand>
            <svg width="26" height="27" viewBox="0 0 26 27" aria-hidden>
              <rect width="26" height="27" rx="2" fill="#e02020" />
              <path d="M0 3Q0 0 3 0H26V8Q14 12 4 10Z" fill="#f07070" />
              <path d="M13 2Q4 4 3 10Q4 15 11 14Q9 18 11 24Q13 26 14 22Q16 16 22 13Q25 10 24 6Q19 12 14 11Q11 9 13 2Z" fill="#fff" />
            </svg>
            通达信金融终端
          </Brand>
          <Menu>
            {["行情", "市场", "资讯", "数据", "专题", "发现", "交易", "行业", "热点", "L1L2"].map((m) => (
              <MenuItem key={m} $w={72}>{m}{m === "发现" && <NewDot />}</MenuItem>
            ))}
          </Menu>
          <Notice><span>交易未登录</span><span>新华医疗</span></Notice>
          <Menu>
            {["功能", "版面", "公式", "选项", "帮助"].map((m) => <MenuItem key={m} $w={57}>{m}</MenuItem>)}
          </Menu>
          <Clock>19:28:00<span>周日</span></Clock>
          <WindowButtons>
            <button aria-label="返回"><svg width="18" height="20" viewBox="0 0 18 20"><path d="M13 2L6 10l7 8" stroke="#333" strokeWidth="3" fill="none" /></svg></button>
            <button aria-label="最小化"><svg width="18" height="20" viewBox="0 0 18 20"><path d="M2 10h14" stroke="#333" strokeWidth="3" /></svg></button>
            <button aria-label="还原"><svg width="20" height="20" viewBox="0 0 20 20"><path d="M2 7h11v10H2zM6 7V3h12v11h-5" stroke="#333" strokeWidth="3" fill="none" /></svg></button>
            <button aria-label="关闭"><svg width="18" height="20" viewBox="0 0 18 20"><path d="M2 3l14 14M16 3L2 17" stroke="#333" strokeWidth="3" /></svg></button>
          </WindowButtons>
        </TitleBar>

        <Body>
          <ChartColumn>
            <PeriodBar>
              <PanelToggle aria-label="侧栏"><PanelIcon /></PanelToggle>
              <Periods>
                {["分时", "1分钟", "5分钟", "15分钟", "30分钟", "60分钟", "日线", "周线", "月线", "多周期", "更多〉"].map((p) => (
                  <Period key={p} $active={p === "日线"}>{p}</Period>
                ))}
              </Periods>
              {["复权", "叠加", "统计", "画线", "F10", "标记", "-自选", "返回"].map((t) => <ToolButton key={t}>{t}</ToolButton>)}
            </PeriodBar>

            <Pane $grow={714} $line>
              <Plot>
                <Legend>
                  <LegendTitle>新华医疗(日线)<Chevron /></LegendTitle>
                  <LegendItem $c="#fff">MA5: 25.93<Arrow /></LegendItem>
                  <LegendItem $c="#ffff00">MA10: 26.37<Arrow /></LegendItem>
                  <LegendItem $c="#ff00ff">MA20: 26.23</LegendItem>
                  <LegendItem $c="#00e600">MA60: 23.04<Arrow up /></LegendItem>
                  <LegendItem $c="#c0c0c0">MA120: 21.47<Arrow up /></LegendItem>
                  <LegendItem $c="#0000ff">MA250: 22.93<Arrow up /></LegendItem>
                  <LegendTools>
                    <svg width="18" height="18" viewBox="0 0 18 18" aria-hidden><path d="M9 1l8 8-8 8-8-8z" fill="none" stroke="#777" /></svg>
                    <PanelIcon />
                  </LegendTools>
                </Legend>
                <PriceChart />
              </Plot>
              <Axis>
                <Drawing viewBox="0 68 73 712" preserveAspectRatio="none">
                  {priceTicks.map(([t, y], i) => (
                    <g key={t}>
                      <line x1="0" x2={i % 2 ? 3 : 8} y1={y} y2={y} stroke="#a80000" strokeWidth="2" />
                      <text x="66" y={y + 7} fontSize="18" fill="#e63232" textAnchor="end">{t}</text>
                    </g>
                  ))}
                </Drawing>
              </Axis>
            </Pane>

            <Pane $grow={500}>
              <Plot>
                <Legend>
                  <LegendTitle><Chevron />TRIX秀才趋势</LegendTitle>
                  <LegendItem $c="#e0e0e0">TRIX: 0.57<Arrow /></LegendItem>
                  <LegendItem $c="#e6e600">MATRIX: 0.73<Arrow /></LegendItem>
                </Legend>
                <Drawing viewBox="0 806 1711 476" preserveAspectRatio="none" shapeRendering="crispEdges" role="img" aria-label="TRIX">
                  {trixTicks.map(([t, y]) => <line key={t} x1="0" x2="1711" y1={y + 0.5} y2={y + 0.5} {...dots} />)}
                  {ribbons.map(([up, p]) => <polygon key={p} points={p} fill={up ? "#960a0a" : "#0a960a"} />)}
                  <path d="M55 1249h3M1254 938h3M1321 938h3" stroke="#ff0" strokeWidth="2" />
                </Drawing>
              </Plot>
              <Axis $box>
                <Drawing viewBox="0 782 72 500" preserveAspectRatio="none">
                  {trixTicks.map(([t, y]) => (
                    <g key={t}>
                      <line x1="0" x2="5" y1={y} y2={y} stroke="#a80000" strokeWidth="2" />
                      <text x="65" y={y + 7} fontSize="18" fill="#e63232" textAnchor="end">{t}</text>
                    </g>
                  ))}
                </Drawing>
              </Axis>
            </Pane>

            <DateAxis>
              <Drawing viewBox="0 0 1786 22" preserveAspectRatio="none" role="img" aria-label="日期">
                {weekTicks.map((x) => <line key={x} x1={x} x2={x} y1="0" y2="6" stroke="#a00000" strokeWidth="1" />)}
                {[250, 520, 790].map((x) => <line key={x} x1={x} x2={x} y1="0" y2="22" stroke="#a00000" strokeWidth="1" />)}
                <rect x="655" y="0" width="119" height="22" fill="#000088" stroke="#a00000" />
                <g fontSize="18" fill="#ff3232">
                  <text x="6" y="17">2022年</text>
                  <text x="252" y="17">6</text>
                  <text x="522" y="17">7</text>
                  <text x="792" y="17">8</text>
                  <text x="657" y="16" fill="#d0d0e0">2022/07/18/一</text>
                </g>
              </Drawing>
            </DateAxis>
            <TabRow $h={25}>
              {["指标", "窗口", "MACD", "VOL-TDX", "CCI", "趋势动力", "主力监控", "私募主图", "MA2", "测试主图", "测试幅图A", "测试幅图B", "更多"].map((t) => (
                <Tab key={t}>{t}</Tab>
              ))}
              <Tab $c="#54ffff">设置</Tab>
            </TabRow>
            <TabRow $h={27}>
              <Tab>扩展∧</Tab>
              <Tab>关联报价</Tab>
              <Tab>资金分布</Tab>
              <Tab $c={YELLOW}>综合资讯</Tab>
              <Tab $c={YELLOW}>行业资讯</Tab>
              <Tab $c={YELLOW}>互动问答</Tab>
              <Tab>新用户福利专享</Tab>
            </TabRow>

            <Ime>
              <ImeKey $w={20} $red>A</ImeKey>
              <ImeKey $w={72}>极品五笔</ImeKey>
              <ImeKey $w={19} aria-label="半角"><svg width="12" height="14" viewBox="0 0 12 14"><path d="M8 0q8 8-1 13-4 1-7-3 9-1 8-10z" fill="#000" /></svg></ImeKey>
              <ImeKey $w={20}>·,</ImeKey>
              <ImeKey $w={19} aria-label="键盘"><svg width="17" height="16" viewBox="0 0 17 16"><path d="M0 1h17M0 15h17" stroke="#fff" /><path d="M1 5h15M2 8h14M1 11h15" stroke="#fff" strokeWidth="2" strokeDasharray="2 1" /><path d="M0 13h17" stroke="#777" /></svg></ImeKey>
            </Ime>
          </ChartColumn>

          <Quote>
            <NameRow>新华医疗<Code>600587</Code><Flag>R</Flag></NameRow>
            <PriceRow>
              <span>26.20</span>
              <Change>
                <svg width="21" height="20" viewBox="0 0 21 20" aria-hidden><path d="M10.500 0L21 20H0z" fill="#ff3232" /></svg>
                0.37
              </Change>
              <span>1.43%</span>
            </PriceRow>
            <QuoteRows rows={sells} />
            <Divider />
            <Section><QuoteRows rows={buys} /></Section>
            <Section $pt={2}><StatRows rows={statsA} h={143} /></Section>
            <Section $pt={2} $pb={3}><StatRows rows={statsB} h={86} /></Section>
            <Section $pt={2}>
              <Grid $h={116}>
                <colgroup><col width="141" /><col width="38" /><col /><col width="64" /></colgroup>
                <tbody>
                  {flows.map(([n, label, w, v, pct, c]) => (
                    <tr key={n + label}>
                      <Label scope="row"><b>{n}</b>{label}</Label>
                      <td><Bar $c={c} style={{ width: w }} /></td>
                      <Value $c={c}>{v}<Unit>万</Unit></Value>
                      <Value $c={c} $pr={4}>{pct}</Value>
                    </tr>
                  ))}
                </tbody>
              </Grid>
            </Section>
            <Grid $h={540}>
              <colgroup><col width="71" /><col width="88" /><col width="93" /><col width="32" /><col /></colgroup>
              <tbody>
                {deals.map(([t, p, v, side, n], i) => (
                  <tr key={i}>
                    <Label scope="row"><b>{t}</b></Label>
                    <Value $c={RED}>{p}</Value>
                    <Value $c={YELLOW}>{v}<Unit>万</Unit></Value>
                    <Value $c={side === "S" ? GREEN : RED}>{side}</Value>
                    <Value $c="#808080" $pr={4}>{n}</Value>
                  </tr>
                ))}
              </tbody>
            </Grid>
          </Quote>

          <SideBar>
            <SideIcons items={sideTop} h={481} />
            <SideRule />
            <SideIcons items={sideMid} h={172} />
            <SideRule />
            <SideGroup $h={482}>
              {sideLow.map(([n, icon]) => <SideButton key={n} aria-label={n}>{icon}</SideButton>)}
              {sidePeriods.map((p) => <SideButton key={p} $on={p === "日"}>{p}</SideButton>)}
            </SideGroup>
          </SideBar>
        </Body>

        <IndexBar>
          <svg width="23" height="22" viewBox="0 0 23 22" aria-hidden>
            <rect x="1" y="1" width="19" height="20" rx="2" fill="#ffd890" stroke="#e09020" strokeWidth="2" />
            <rect x="6" y="6" width="9" height="9" fill="#f0a020" />
          </svg>
          <IndexQuote name="上证" v="3087.29" c="51.16" p="1.69%" t="5138" />
          <IndexQuote name="沪深" v="3788.44" c="102.75" p="2.79%" t="3445" />
          <IndexQuote name="创业" v="2405.32" c="48.19" />
        </IndexBar>

        <Banner href="#">
          <BannerName>公式指标网</BannerName>
          <svg width="106" height="106" viewBox="0 0 106 106" aria-hidden>
            <path d="M7 50A46 46 0 0 1 42 7" fill="none" stroke="#d65c48" strokeWidth="11" />
            <path d="M64 7A46 46 0 0 1 99 50" fill="none" stroke="#d65c48" strokeWidth="11" />
            <path d="M99 54A46 46 0 0 1 46 100" fill="none" stroke="#f0d048" strokeWidth="11" />
            <path fillRule="evenodd" d="M44 1H62V12L58 18V21H74V50H33V42H43V36H33V21H48V18L44 12ZM53 4a5 5 0 1 0 .1 0Z" fill="#f0d048" />
            <path d="M43 30h5v6h-5zM57 30h6v12h-6z" fill="#80abd8" />
            <path d="M33 54H74V60H62V64H74V72H64L74 80V86L68 90H62V82L53 69L44 82V90H38L32 86V76L45 66H33Z" fill="#f0d048" />
            <path id="rim" d="M6 56A46 46 0 0 0 44 98" fill="none" />
            <text fontSize="10" fontWeight="700" fill="#fff" fontFamily="Liberation Sans"><textPath href="#rim">www.9m8.cn</textPath></text>
          </svg>
          <BannerUrl>www.9m8.cn</BannerUrl>
        </Banner>
      </Shell>
    </>
  );
}
